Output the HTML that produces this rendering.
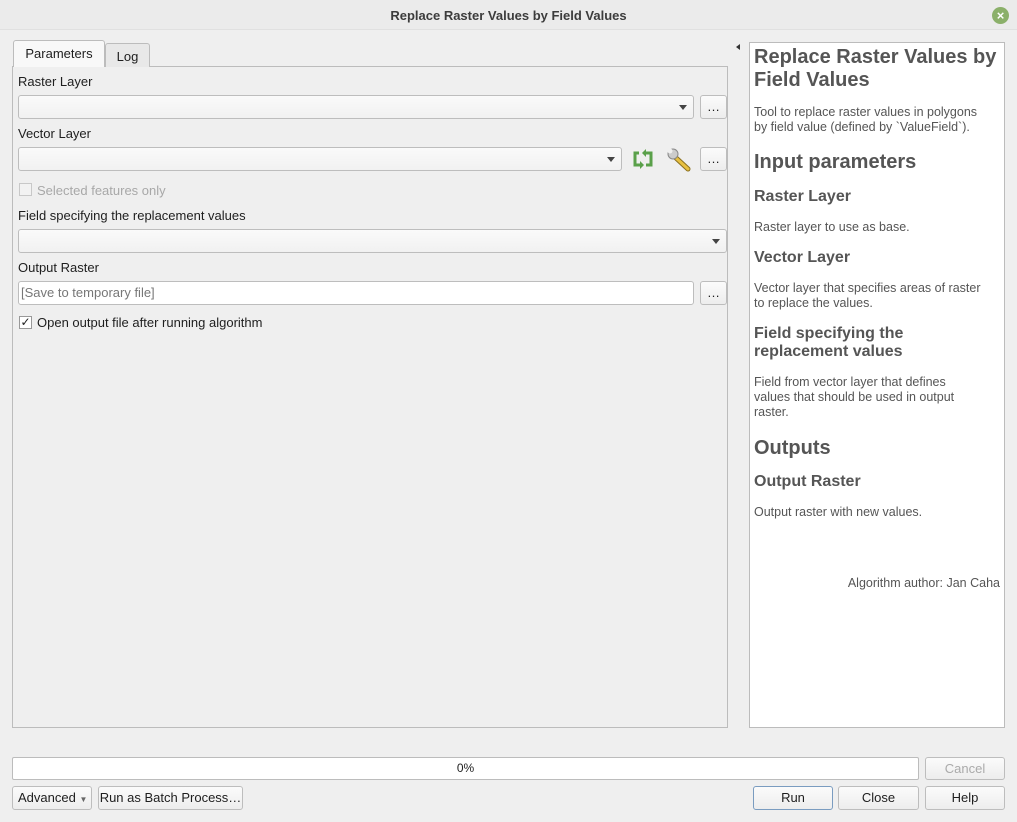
<!DOCTYPE html>
<html><head><meta charset="utf-8"><style>
*{box-sizing:border-box;margin:0;padding:0}
body{width:1017px;height:822px;background:#efefef;font-family:"Liberation Sans","DejaVu Sans",sans-serif;font-size:13px;color:#1e1e1e;position:relative;overflow:hidden}
.a{position:absolute}
.title{left:0;top:0;width:1017px;height:30px;background:#ebebeb;border-bottom:1px solid #e0e0e0;text-align:center;line-height:31px;font-weight:bold;color:#3c3c3c;font-size:13px}
.close{left:992px;top:7px;width:17px;height:17px;border-radius:50%;background:#8bb06a;color:#fff;font-size:13px;line-height:17px;text-align:center;font-weight:bold}
.pane{left:12px;top:66px;width:716px;height:662px;border:1px solid #bcbcbc;background:#efefef}
.tab{top:41px;height:26px;border:1px solid #bcbcbc;border-bottom:none;border-radius:3px 3px 0 0;text-align:center;line-height:26px}
.lbl{left:18px}
.combo{height:24px;border:1px solid #bdbdbd;border-radius:3px;background:linear-gradient(#fafafa,#f1f1f1)}
.arrow{width:0;height:0;border-left:4px solid transparent;border-right:4px solid transparent;border-top:5px solid #444}
.btn{border:1px solid #bdbdbd;border-radius:3px;background:linear-gradient(#fbfbfb,#ededed);text-align:center;line-height:22px}
.help{left:749px;top:42px;width:256px;height:686px;background:#fff;border:1px solid #bcbcbc;color:#555;font-family:"Liberation Sans","DejaVu Sans",sans-serif;font-size:12.5px;line-height:15px}
.help div{position:absolute;left:4px;white-space:nowrap}
.h1{font-size:20px;font-weight:bold;line-height:23px}
.h3{font-size:16px;font-weight:bold;line-height:18px}
</style></head><body>
<div class="a title">Replace Raster Values by Field Values</div>
<div class="a close">×</div>
<div class="a pane"></div>
<div class="a tab" style="left:13px;width:92px;background:#f8f8f8;height:27px;top:40px">Parameters</div>
<div class="a tab" style="left:105px;width:45px;top:43px;height:24px;background:#e8e8e8">Log</div>
<div class="a lbl" style="top:74px">Raster Layer</div>
<div class="a combo" style="left:18px;top:95px;width:676px"><div class="a arrow" style="right:6px;top:9px"></div></div>
<div class="a btn" style="left:700px;top:95px;width:27px;height:24px">…</div>
<div class="a lbl" style="top:126px">Vector Layer</div>
<div class="a combo" style="left:18px;top:147px;width:604px"><div class="a arrow" style="right:6px;top:9px"></div></div>
<svg class="a" style="left:631px;top:148px" width="24" height="22" viewBox="0 0 24 22"><g fill="none" stroke="#5aa04a" stroke-width="3"><path d="M8 5H4v12h5"/><path d="M15 17h5V5h-5"/></g><path d="M9 13l4 4-4 4z" fill="#5aa04a"/><path d="M15 1l-4 4 4 4z" fill="#5aa04a"/></svg>
<svg class="a" style="left:666px;top:147px" width="26" height="26" viewBox="0 0 26 26"><path d="M9 10l13 12" stroke="#8a7020" stroke-width="5" stroke-linecap="round"/><path d="M9 10l13 12" stroke="#e8c040" stroke-width="3" stroke-linecap="round"/><circle cx="7" cy="7" r="5" fill="#ccc" stroke="#888"/><circle cx="4" cy="4" r="2.5" fill="#efefef"/></svg>
<div class="a btn" style="left:700px;top:147px;width:27px;height:24px">…</div>
<div class="a" style="left:19px;top:183px;width:13px;height:13px;border:1px solid #c8c8c8;background:#f2f2f2"></div>
<div class="a" style="left:37px;top:183px;color:#a8a8a8">Selected features only</div>
<div class="a lbl" style="top:208px">Field specifying the replacement values</div>
<div class="a combo" style="left:18px;top:229px;width:709px"><div class="a arrow" style="right:6px;top:9px"></div></div>
<div class="a lbl" style="top:260px">Output Raster</div>
<div class="a" style="left:18px;top:281px;width:676px;height:24px;border:1px solid #bdbdbd;border-radius:3px;background:#fff;color:#777;line-height:22px;padding-left:2px">[Save to temporary file]</div>
<div class="a btn" style="left:700px;top:281px;width:27px;height:24px">…</div>
<div class="a" style="left:19px;top:316px;width:13px;height:13px;border:1px solid #999;background:#fff;font-size:12px;line-height:11px;text-align:center">✓</div>
<div class="a" style="left:37px;top:315px">Open output file after running algorithm</div>
<div class="a" style="left:736px;top:44px;width:0;height:0;border-top:3px solid transparent;border-bottom:3px solid transparent;border-right:4px solid #333"></div>
<div class="a help">
<div class="h1" style="top:3px">Replace Raster Values by</div>
<div class="h1" style="top:26px">Field Values</div>
<div style="top:62px">Tool to replace raster values in polygons</div>
<div style="top:77px">by field value (defined by `ValueField`).</div>
<div class="h1" style="top:108px">Input parameters</div>
<div class="h3" style="top:145px">Raster Layer</div>
<div style="top:177px">Raster layer to use as base.</div>
<div class="h3" style="top:206px">Vector Layer</div>
<div style="top:238px">Vector layer that specifies areas of raster</div>
<div style="top:253px">to replace the values.</div>
<div class="h3" style="top:282px">Field specifying the</div>
<div class="h3" style="top:300px">replacement values</div>
<div style="top:332px">Field from vector layer that defines</div>
<div style="top:347px">values that should be used in output</div>
<div style="top:362px">raster.</div>
<div class="h1" style="top:394px">Outputs</div>
<div class="h3" style="top:430px">Output Raster</div>
<div style="top:462px">Output raster with new values.</div>
<div style="top:533px;left:auto;right:4px">Algorithm author: Jan Caha</div>
</div>
<div class="a" style="left:12px;top:757px;width:907px;height:23px;border:1px solid #bcbcbc;border-radius:2px;background:#fff;text-align:center;line-height:21px;font-size:12px">0%</div>
<div class="a btn" style="left:925px;top:757px;width:80px;height:23px;color:#aaa">Cancel</div>
<div class="a btn" style="left:12px;top:786px;width:80px;height:24px;text-align:left;padding-left:5px">Advanced <span style="font-size:8px;color:#666">▼</span></div>
<div class="a btn" style="left:98px;top:786px;width:145px;height:24px">Run as Batch Process…</div>
<div class="a btn" style="left:753px;top:786px;width:80px;height:24px;border-color:#7a9cc0">Run</div>
<div class="a btn" style="left:838px;top:786px;width:81px;height:24px">Close</div>
<div class="a btn" style="left:925px;top:786px;width:80px;height:24px">Help</div>
</body></html>
